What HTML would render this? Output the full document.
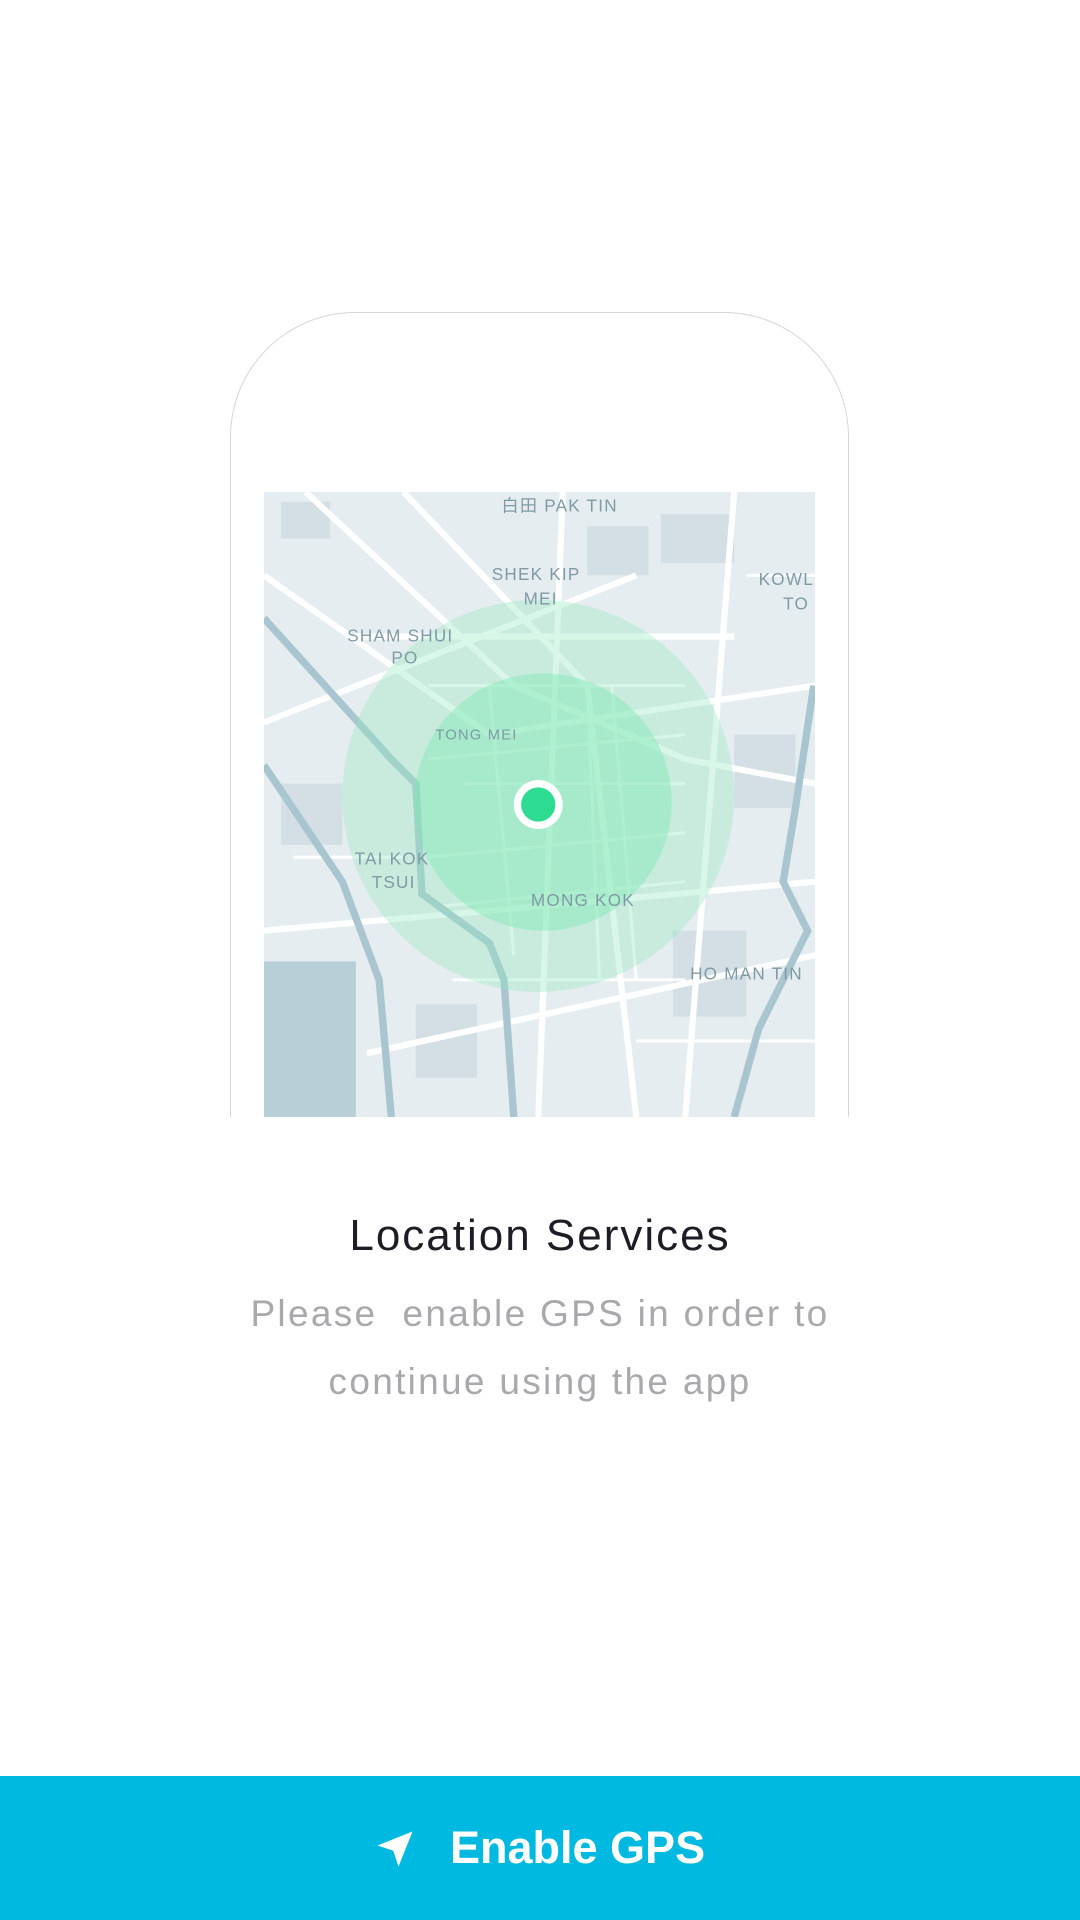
<!DOCTYPE html>
<html><head><meta charset="utf-8"><style>
html,body{margin:0;padding:0;background:#fff;width:1080px;height:1920px;overflow:hidden;font-family:"Liberation Sans",sans-serif}
.phone{position:absolute;left:230px;top:312px;width:619px;height:805px;border:1px solid #d6d6d6;border-bottom:none;border-radius:125px 125px 0 0;box-sizing:border-box}
.map{position:absolute;left:264px;top:492px;width:551px;height:625px}
.t{position:absolute;left:0;width:1080px;text-align:center}
.btn{position:absolute;left:0;top:1776px;width:1080px;height:144px;background:#00b9e1;color:#fff;font-weight:bold;font-size:45px;letter-spacing:0}
</style></head><body>
<div class="phone"></div>
<svg class="map" viewBox="216 402 450 510" preserveAspectRatio="none">
<rect x="216" y="402" width="450" height="510" fill="#e6edf0"/>
<g fill="#d3dfe4">
<rect x="230" y="410" width="40" height="30"/><rect x="540" y="420" width="60" height="40"/><rect x="600" y="600" width="50" height="60"/><rect x="230" y="640" width="50" height="50"/><rect x="550" y="760" width="60" height="70"/><rect x="340" y="820" width="50" height="60"/><rect x="480" y="430" width="50" height="40"/>
</g>
<rect x="216" y="785" width="75" height="127" fill="#b8cfd8"/>
<g stroke="#fff" stroke-width="5" fill="none">
<path d="M250 402 L420 560 L560 620 L666 640"/><path d="M216 470 L400 600 L666 560"/><path d="M330 402 L480 560 L520 912"/><path d="M460 402 L440 912"/><path d="M216 760 L666 720"/><path d="M290 520 L600 520"/><path d="M600 402 L560 912"/><path d="M216 590 L520 470"/><path d="M300 860 L666 780"/>
</g>
<g stroke="#fff" stroke-width="2.5" fill="none" opacity=".9">
<path d="M350 560 L560 560"/><path d="M350 620 L560 600"/><path d="M350 700 L560 680"/><path d="M360 740 L560 720"/><path d="M400 560 L420 780"/><path d="M480 560 L490 800"/><path d="M500 560 L520 800"/><path d="M380 640 L560 640"/><path d="M370 800 L560 800"/><path d="M520 850 L666 850"/><path d="M240 700 L330 700"/><path d="M610 470 L666 470"/>
</g>
<g stroke="#a9c6d0" stroke-width="6" fill="none">
<path d="M216 505 L320 620 L340 640 L345 730 L400 770 L412 800 L420 912"/>
<path d="M216 625 L280 720 L310 800 L320 912"/>
<path d="M665 560 L650 660 L640 720 L660 760 L620 840 L600 912"/>
</g>
<circle cx="440" cy="650" r="160" fill="#8ee8bd" opacity=".35"/>
<circle cx="444" cy="655" r="105" fill="#7ee6b3" opacity=".45"/>
<g font-family="Liberation Sans" font-size="14" fill="#7f9aa5" letter-spacing="1">
<text x="410" y="418">白田 PAK TIN</text><text x="402" y="474">SHEK KIP</text><text x="428" y="494">MEI</text>
<text x="284" y="524">SHAM SHUI</text><text x="320" y="542">PO</text><text x="356" y="604" font-size="12">TONG MEI</text>
<text x="290" y="706">TAI KOK</text><text x="304" y="725">TSUI</text><text x="434" y="740">MONG KOK</text><text x="564" y="800">HO MAN TIN</text><text x="620" y="478">KOWL</text><text x="640" y="498">TO</text>
</g>
<circle cx="440" cy="657" r="20" fill="#fff"/><circle cx="440" cy="657" r="14" fill="#2edc91"/>
</svg>
<div class="t" style="top:1211px;font-size:44px;color:#1d1d26;letter-spacing:2px">Location Services</div>
<div class="t" style="top:1280px;font-size:37px;color:#a9a9ad;line-height:68px;letter-spacing:2.3px">Please&nbsp; enable GPS in order to<br>continue using the app</div>
<div class="btn">
<svg style="position:absolute;left:374px;top:52px" width="42" height="42" viewBox="0 0 24 24"><path d="M22 2 L2 10 L11 13 L14 22 Z" fill="#fff"/></svg>
<div style="position:absolute;left:450px;top:46px">Enable GPS</div>
</div>
</body></html>
